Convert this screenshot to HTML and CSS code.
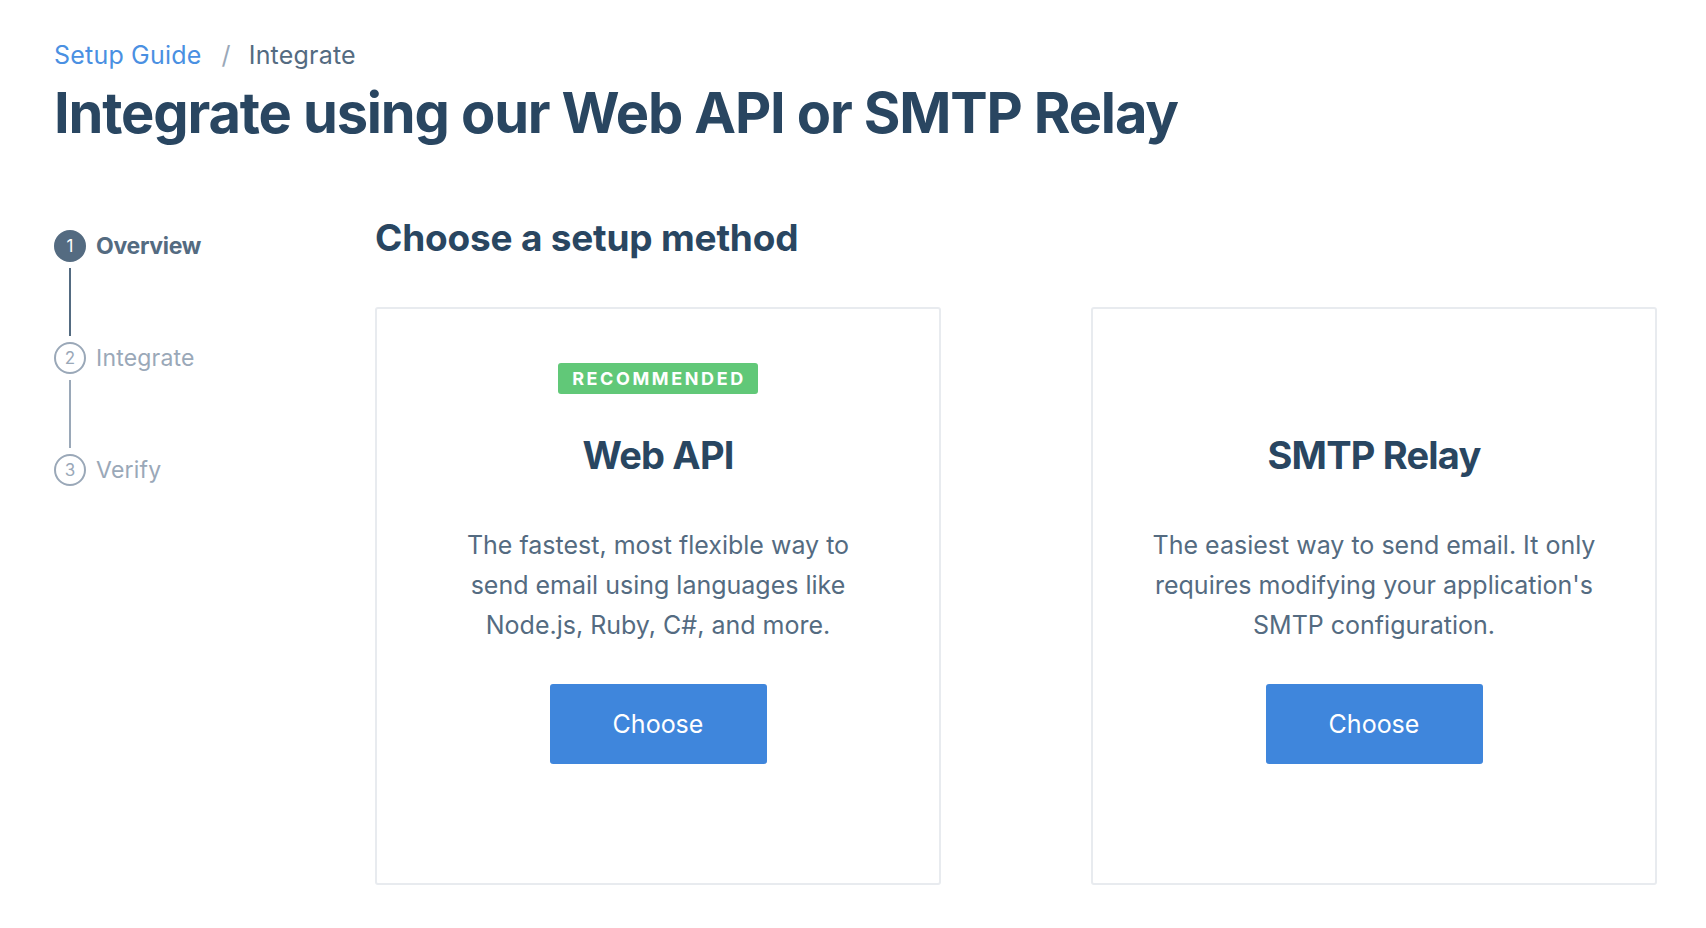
FILE: index.html
```html
<!DOCTYPE html>
<html lang="en">
<head>
<meta charset="utf-8">
<title>Integrate using our Web API or SMTP Relay</title>
<link rel="stylesheet" href="styles.css">
</head>
<body>
<div class="page">
  <nav class="breadcrumb">
    <a class="crumb-link" href="#">Setup Guide</a>
    <span class="crumb-sep">/</span>
    <span class="crumb-current">Integrate</span>
  </nav>
  <h1 class="page-title">Integrate using our Web API or SMTP Relay</h1>

  <div class="layout">
    <ol class="steps">
      <li class="step step-active">
        <span class="step-num">1</span>
        <span class="step-label">Overview</span>
      </li>
      <li class="step-line step-line-active"></li>
      <li class="step">
        <span class="step-num">2</span>
        <span class="step-label">Integrate</span>
      </li>
      <li class="step-line"></li>
      <li class="step">
        <span class="step-num">3</span>
        <span class="step-label">Verify</span>
      </li>
    </ol>

    <section class="content">
      <h2 class="section-title">Choose a setup method</h2>
      <div class="cards">
        <div class="card">
          <div class="badge-row"><span class="badge">RECOMMENDED</span></div>
          <h3 class="card-title">Web API</h3>
          <p class="card-text">The fastest, most flexible way to send email using languages like Node.js, Ruby, C#, and more.</p>
          <button class="btn">Choose</button>
        </div>
        <div class="card">
          <div class="badge-row"></div>
          <h3 class="card-title">SMTP Relay</h3>
          <p class="card-text">The easiest way to send email. It only requires modifying your application's SMTP configuration.</p>
          <button class="btn">Choose</button>
        </div>
      </div>
    </section>
  </div>
</div>
</body>
</html>
```

FILE: styles.css
```css
* { box-sizing: border-box; }
html, body { margin: 0; padding: 0; background: #ffffff; }
body {
  font-family: Inter, "Noto Sans", sans-serif;
  color: #294661;
}
.page {
  padding: 37px 49px 0 54px;
}
.breadcrumb {
  display: flex;
  align-items: baseline;
  font-size: 25px;
  line-height: 36px;
  letter-spacing: 0.2px;
}
.crumb-link { color: #4a90e2; text-decoration: none; }
.crumb-sep { color: #9aa8b8; margin: 0 18px 0 20px; }
.crumb-current { color: #546b81; }

.page-title {
  margin: 8px 0 0;
  font-size: 56px;
  line-height: 64px;
  font-weight: 700;
  letter-spacing: -1.15px;
  color: #294661;
}

.layout {
  display: flex;
  margin-top: 69px;
}
.steps {
  list-style: none;
  margin: 0;
  padding: 0;
  width: 321px;
  flex: none;
  padding-top: 16px;
}
.step {
  display: flex;
  align-items: center;
  height: 32px;
}
.step-num {
  width: 32px;
  height: 32px;
  border-radius: 50%;
  border: 2px solid #9aa8b8;
  color: #9aa8b8;
  font-size: 17px;
  display: flex;
  align-items: center;
  justify-content: center;
  flex: none;
}
.step-label {
  margin-left: 10px;
  font-size: 23px;
  letter-spacing: 0.2px;
  color: #9aa8b8;
}
.step-active .step-num {
  background: #546b81;
  border-color: #546b81;
  color: #ffffff;
}
.step-active .step-label {
  font-weight: 700;
  letter-spacing: -0.3px;
  color: #546b81;
}
.step-line {
  width: 2px;
  height: 68px;
  margin: 6px 0 6px 15px;
  background: #9aa8b8;
}
.step-line-active { background: #546b81; }

.content { flex: 1; }
.section-title {
  margin: 0;
  font-size: 37px;
  line-height: 48px;
  font-weight: 700;
  letter-spacing: -0.2px;
  color: #294661;
}
.cards {
  display: grid;
  grid-template-columns: 566px 566px;
  column-gap: 150px;
  margin-top: 45px;
}
.card {
  border: 2px solid #e8ebef;
  border-radius: 3px;
  height: 578px;
  display: flex;
  flex-direction: column;
  align-items: center;
  padding-top: 54px;
}
.badge-row {
  height: 31px;
  display: flex;
  justify-content: center;
}
.badge {
  background: #61c878;
  color: #ffffff;
  font-size: 18px;
  font-weight: 700;
  letter-spacing: 2.6px;
  line-height: 31px;
  padding: 0 12px 0 14px;
  border-radius: 3px;
}
.card-title {
  margin: 37px 0 0;
  font-size: 38px;
  line-height: 48px;
  font-weight: 700;
  letter-spacing: -0.8px;
  color: #294661;
}
.card-text {
  margin: 46px 0 0;
  width: 444px;
  text-align: center;
  font-size: 25px;
  line-height: 40px;
  letter-spacing: 0;
  color: #546b81;
}
.btn {
  margin-top: 39px;
  width: 217px;
  height: 80px;
  border: none;
  border-radius: 3px;
  background: #3f86dc;
  color: #ffffff;
  font-family: inherit;
  font-size: 25px;
  cursor: pointer;
}
```
